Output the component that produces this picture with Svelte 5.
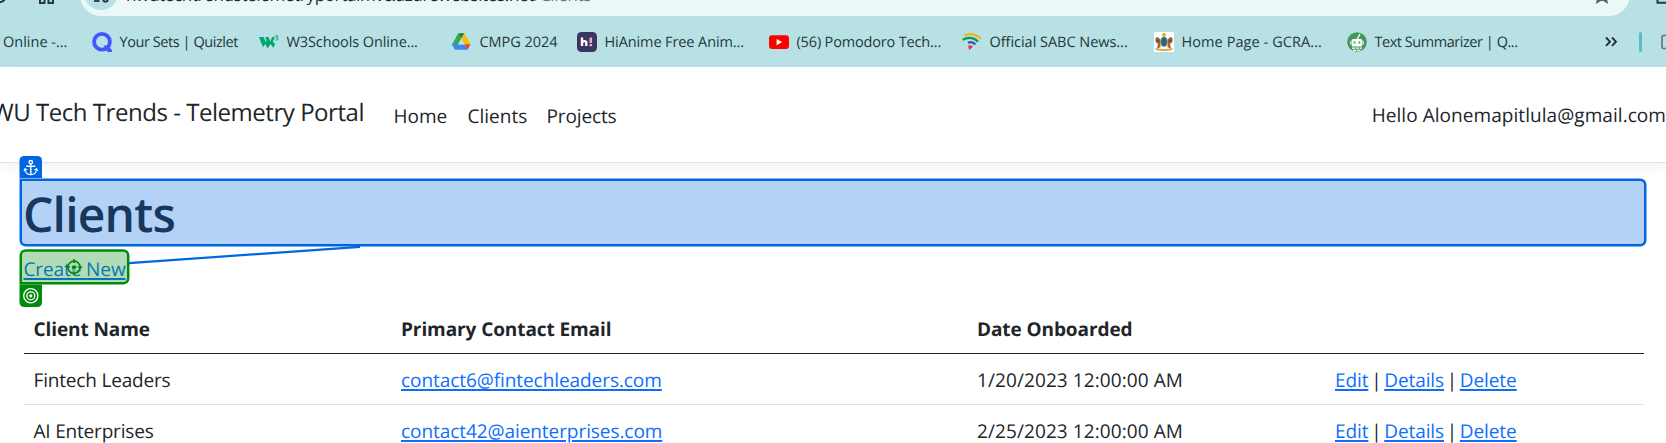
<script>
  const bookmarks = [
    { icon: 'quizlet', label: 'Your Sets | Quizlet', width: 167, spacing: -0.431 },
    { icon: 'w3', label: 'W3Schools Online...', width: 193, spacing: -0.1 },
    { icon: 'drive', label: 'CMPG 2024', width: 125, spacing: -0.041 },
    { icon: 'hianime', label: 'HiAnime Free Anim...', width: 192, spacing: -0.1 },
    { icon: 'youtube', label: '(56) Pomodoro Tech...', width: 193, spacing: -0.16 },
    { icon: 'sabc', label: 'Official SABC News...', width: 192, spacing: -0.03 },
    { icon: 'crest', label: 'Home Page - GCRA...', width: 193, spacing: 0.08 },
    { icon: 'robot', label: 'Text Summarizer | Q...', width: 190, spacing: -0.457 }
  ];

  const clients = [
    { name: 'Fintech Leaders', spacing: -0.176, email: 'contact6@fintechleaders.com', date: '1/20/2023 12:00:00 AM' },
    { name: 'AI Enterprises', spacing: -0.188, email: 'contact42@aienterprises.com', date: '2/25/2023 12:00:00 AM' }
  ];
</script>

<div class="screen">
  <div class="toolbar">
    <svg class="nav-icons" width="80" height="16" viewBox="0 0 80 16">
      <path d="M-4 1.5Q4 4 6-4" fill="none" stroke="#26393b" stroke-width="2.2" />
      <path d="M40-3V3H44.5V-3M48.5-3V3H53V-3" fill="none" stroke="#26393b" stroke-width="2" />
    </svg>
    <div class="omnibox">
      <div class="site-info">
        <svg width="34" height="34" viewBox="0 0 34 34">
          <path d="M10 25H15.5" stroke="#33494b" stroke-width="2" />
          <circle cx="21.5" cy="23.5" r="2.2" fill="none" stroke="#26393b" stroke-width="1.8" />
        </svg>
      </div>
      <div class="url">nwutechtrendstelemetryportalmvc.azurewebsites.net<span>/Clients</span></div>
      <svg class="star" width="18" height="18" viewBox="0 0 18 18">
        <path d="M9 1.5l2.2 5 5.3.5-4 3.6 1.2 5.4L9 13.2 4.300 16l1.200-5.400-4-3.600 5.300-.5z" fill="none" stroke="#5c6668" stroke-width="1.9" />
      </svg>
    </div>
    <svg class="side" width="36" height="16" viewBox="0 0 36 16">
      <path d="M27.500-4V2.700H40" fill="none" stroke="#26393b" stroke-width="2" />
    </svg>
  </div>

  <div class="bookmarks">
    <div class="bm first"><span class="label" style="letter-spacing: 0px">Online -...</span></div>
    {#each bookmarks as b}
      <div class="bm" style="width: {b.width}px">
        <svg width="20" height="20" viewBox="0 0 20 20">
          {#if b.icon === 'quizlet'}
            <circle cx="10" cy="9.800" r="7.900" fill="none" stroke="#4257ff" stroke-width="3.800" />
            <path d="M11.500 13.500H16L20 18.200V20H15.500z" fill="#4257ff" />
          {:else if b.icon === 'w3'}
            <path d="M0 5H4.500L6.800 10 7.600 8.400 6.200 5H9.400L11.500 9.500 13 5H16L13.800 9.500 16 12 14.500 16 11.500 12 8.500 16.500 6.200 12 4 15.200z" fill="#04a56d" />
            <path d="M16.200 4H19L17.500 5.700Q19.400 5.800 19 7.300 18.200 8.600 16.400 7.800" fill="none" stroke="#04a56d" stroke-width="1" />
          {:else if b.icon === 'drive'}
            <path d="M6.300 1.300L9.200 6.400 3.200 17.600 0 12.500z" fill="#34a853" />
            <path d="M6.300 1.300H12.400L9.300 6.600z" fill="#188038" />
            <path d="M12.400 1.300L18.500 12.300H12.500L9.300 6.600z" fill="#fbbc04" />
            <path d="M0 12.500H12.500L15.600 17.800H3.200z" fill="#4285f4" />
            <path d="M12.500 12.300H18.500L15.600 17.800z" fill="#ea4335" />
            <path d="M9.300 6.900L12.300 12.300H6.300z" fill="#b7e1e4" />
          {:else if b.icon === 'hianime'}
            <rect width="20" height="20" rx="4.500" fill="#3a3462" />
            <path d="M5 5.500V14M5 10.600Q7.300 8 9.300 10V14" fill="none" stroke="#fff" stroke-width="2.400" />
            <path d="M13.800 5.500V11M13.800 12V14.200" stroke="#e9a9d0" stroke-width="2.600" />
          {:else if b.icon === 'youtube'}
            <rect x="0" y="3.200" width="20" height="13.800" rx="3" fill="#f00" />
            <path d="M7.600 7L13.200 10.100 7.600 13.200z" fill="#fff" />
          {:else if b.icon === 'sabc'}
            <path d="M2.500 3.600Q11-.3 18.800 6.700" fill="none" stroke="#f3b21b" stroke-width="2.300" />
            <path d="M.6 7.800Q9.500 3.300 16 9.800" fill="none" stroke="#14964b" stroke-width="2.200" />
            <path d="M6 10.800Q10.500 8.800 13.300 12.500" fill="none" stroke="#2856b8" stroke-width="2.200" />
            <path d="M6 13.700Q8.500 12.600 11 14.500L7.300 18.300z" fill="#ec3b45" />
          {:else if b.icon === 'crest'}
            <rect width="20" height="20" fill="#fff" />
            <path d="M8 4L8.300 1.500 10 .8 11.700 1.500 12 4z" fill="#d5b54a" />
            <path d="M1.500 6L4 5 6.500 8V15L3 17 4 12 1.500 10zM18.500 6L16 5 13.500 8V15L17 17 16 12 18.500 10z" fill="#9a6238" />
            <path d="M3 8L5 9.500M17 8L15 9.500" stroke="#4b454d" stroke-width="1.500" />
            <ellipse cx="10" cy="9.700" rx="3.400" ry="5" fill="#1c6593" stroke="#c99a38" />
            <path d="M1.500 17Q10 18.800 18.500 17" fill="none" stroke="#dda847" stroke-width="2" />
          {:else}
            <circle cx="10" cy="10" r="9.800" fill="#46995a" />
            <path d="M10.300 7L13 2" stroke="#fff" stroke-width="1.400" />
            <rect x="4.700" y="7" width="10.600" height="7.600" rx="1.500" fill="#fff" />
            <path d="M3.800 9V12.500M16.200 9V12.500" stroke="#fff" stroke-width="1" />
            <path d="M7.600 9.500V11.500M12.400 9.500V11.500" stroke="#46995a" stroke-width="1.800" />
            <path d="M5 16.200H15M6 18.300H14" stroke="#fff" stroke-width="1.300" stroke-dasharray="3 .8" />
          {/if}
        </svg>
        <span class="label" style="letter-spacing: {b.spacing}px">{b.label}</span>
      </div>
    {/each}
    <div class="more">
      <svg width="14" height="12" viewBox="0 0 14 12"><path d="M2 1.500L6 5.700 2 9.900M8 1.500L12 5.700 8 9.900" fill="none" stroke="#1f2f31" stroke-width="1.900" /></svg>
      <i class="divider"></i>
      <svg width="5" height="16" viewBox="0 0 5 16"><path d="M8 1.500H2.500Q1 1.500 1 3V13Q1 14.500 2.500 14.500H8" fill="none" stroke="#66777a" stroke-width="1.700" /></svg>
    </div>
  </div>

  <header>
    <div class="brand"><span>NWU Tech Trends - Telemetry Portal</span></div>
    <nav>
      <a href="#home" class="home">Home</a>
      <a href="#clients" class="clients">Clients</a>
      <a href="#projects" class="projects">Projects</a>
    </nav>
    <div class="hello">Hello Alonemapitlula@gmail.com</div>
  </header>

  <main>
    <h1>Clients</h1>
    <p><a href="#create">Create New</a></p>
    <table>
      <colgroup><col class="c1" /><col class="c2" /><col class="c3" /><col /></colgroup>
      <thead>
        <tr><th>Client Name</th><th>Primary Contact Email</th><th>Date Onboarded</th><th></th></tr>
      </thead>
      <tbody>
        {#each clients as c}
          <tr>
            <td style="letter-spacing: {c.spacing}px">{c.name}</td>
            <td class="email"><a href="#mail">{c.email}</a></td>
            <td class="date">{c.date}</td>
            <td>
              <div class="actions">
                <a href="#edit">Edit</a><span>|</span><a href="#details">Details</a><span>|</span><a href="#delete">Delete</a>
              </div>
            </td>
          </tr>
        {/each}
      </tbody>
    </table>
  </main>

  <svg class="overlay" width="1666" height="443" viewBox="0 0 1666 443">
    <path d="M129 263.200L360 246.800" stroke="#0067e0" stroke-width="2.300" />
    <path d="M20.750 179.750H1640.250a5 5 0 0 1 5 5V240.250a5 5 0 0 1-5 5H25.750a5 5 0 0 1-5-5z" fill="#0067e0" fill-opacity=".295" stroke="#0067e0" stroke-width="2.500" />
    <path d="M19.500 178V160.500a4.500 4.500 0 0 1 4.500-4.500H37.500a4.500 4.500 0 0 1 4.500 4.500V178z" fill="#0067e0" />
    <g fill="none" stroke="#fff" stroke-width="1.400">
      <circle cx="30.800" cy="162.200" r="1.700" />
      <path d="M30.800 164V174.500M26.300 166.300H35.300" />
      <path d="M24.800 168.800Q25.300 174.500 30.800 174.700 36.300 174.500 36.800 168.800M24 171L25 168.700 27.200 169.800M37.600 171L36.600 168.700 34.400 169.800" stroke-width="1.200" />
    </g>
    <path d="M20.750 283.300V255.500a5 5 0 0 1 5-5H123.200a5 5 0 0 1 5 5V278.300a5 5 0 0 1-5 5z" fill="#008a0e" fill-opacity=".3" stroke="#008a0e" stroke-width="2.500" />
    <path d="M19.500 284.500H42V302.500a4.500 4.500 0 0 1-4.500 4.500H24a4.500 4.500 0 0 1-4.500-4.500z" fill="#008a0e" />
    <g fill="none" stroke="#fff" stroke-width="1.300">
      <circle cx="30.800" cy="295.800" r="7.100" />
      <circle cx="30.800" cy="295.800" r="4" />
      <circle cx="30.800" cy="295.800" r="1.600" fill="#fff" stroke="none" />
    </g>
    <circle cx="74" cy="267.300" r="6.100" fill="#b3dcb7" fill-opacity=".6" stroke="#008a0e" stroke-width="1.700" />
    <path d="M74 259V263M74 271.600V275.600M65.700 267.300H69.700M78.300 267.300H82.300" stroke="#008a0e" stroke-width="1.600" />
    <circle cx="74" cy="267.300" r="2.100" fill="#008a0e" />
  </svg>
</div>

<style>
  :global(body) { background: #fff; overflow: hidden; }
  .screen {
    position: relative;
    width: 1666px;
    height: 443px;
    overflow: hidden;
    font-family: "Open Sans", "Noto Sans", sans-serif;
    font-size: 19px;
    line-height: 30px;
    color: #212529;
    text-rendering: geometricPrecision;
  }
  svg { display: block; flex: none; }
  .toolbar { display: flex; height: 16px; background: #b7e1e4; overflow: hidden; }
  .omnibox {
    box-sizing: border-box;
    display: flex;
    align-items: center;
    width: 1550px;
    height: 42px;
    margin-top: -26px;
    padding-left: 4px;
    border-radius: 21px;
    background: #ebf8f8;
    flex: none;
  }
  .site-info { width: 34px; height: 34px; margin-top: -4px; border-radius: 50%; background: #b7e1e4; }
  .url {
    width: 1475px;
    margin: -1px 0 0 8px;
    font-size: 17px;
    letter-spacing: -0.331px;
    color: #1c2b2d;
    white-space: nowrap;
  }
  .url span { color: #6c7879; }
  .star { margin: 0 0 0 -8px; }
  .bookmarks {
    box-sizing: border-box;
    display: flex;
    align-items: center;
    height: 51px;
    padding-top: 1px;
    background: #b7e1e4;
    font-size: 14.5px;
    color: #24383b;
  }
  .bm { display: flex; align-items: center; gap: 7.500px; flex: none; white-space: nowrap; }
  .first { width: 89px; padding-left: 3px; }
  .label { line-height: 20px; padding-top: 1px; }
  .more { display: flex; align-items: center; padding-left: 67px; }
  .divider { width: 3px; height: 20px; margin: 0 19px 0 21px; border-radius: 1.500px; background: #5bbcc3; }
  header {
    box-sizing: border-box;
    display: flex;
    align-items: center;
    height: 96px;
    border-bottom: 1px solid #dee2e6;
    box-shadow: 0 5px 15px rgba(0, 0, 0, 0.05);
    white-space: nowrap;
  }
  .brand {
    display: flex;
    justify-content: flex-end;
    width: 364px;
    margin-bottom: 3px;
    overflow: hidden;
    font-size: 24px;
    letter-spacing: -0.462px;
    flex: none;
  }
  nav { display: flex; width: 980px; padding: 2px 0 0 29.500px; }
  nav a { color: #212529; text-decoration: none; flex: none; }
  .home { width: 74px; }
  .clients { width: 79px; }
  .projects { letter-spacing: -0.127px; }
  .hello { letter-spacing: 0.06px; flex: none; margin-left: -0.500px; }
  main { padding: 22px 22px 0 23.500px; }
  h1 {
    margin: 0 0 9px -0.500px;
    font-size: 48px;
    font-weight: 600;
    line-height: 60px;
    letter-spacing: -0.813px;
  }
  p { margin: 0 0 19px; letter-spacing: -0.103px; }
  main a { color: #0d6efd; text-decoration: underline 2px; text-underline-offset: 2px; }
  table { width: 1620px; margin-left: 0.500px; table-layout: fixed; border-spacing: 0; }
  .c1 { width: 367px; }
  .c2 { width: 576px; }
  .c3 { width: 358px; }
  th, td { padding: 11px 10px 9px; height: 30px; text-align: left; white-space: nowrap; border-bottom: 1px solid #dee2e6; }
  th { border-color: #212529; letter-spacing: -0.09px; }
  th:first-child, td:first-child { padding-left: 9.500px; }
  .email { letter-spacing: -0.068px; }
  .date { letter-spacing: 0.09px; }
  .actions { display: flex; align-items: center; letter-spacing: -0.09px; }
  .actions span { width: 15.800px; text-align: center; }
  .overlay { position: absolute; left: 0; top: 0; }
</style>
